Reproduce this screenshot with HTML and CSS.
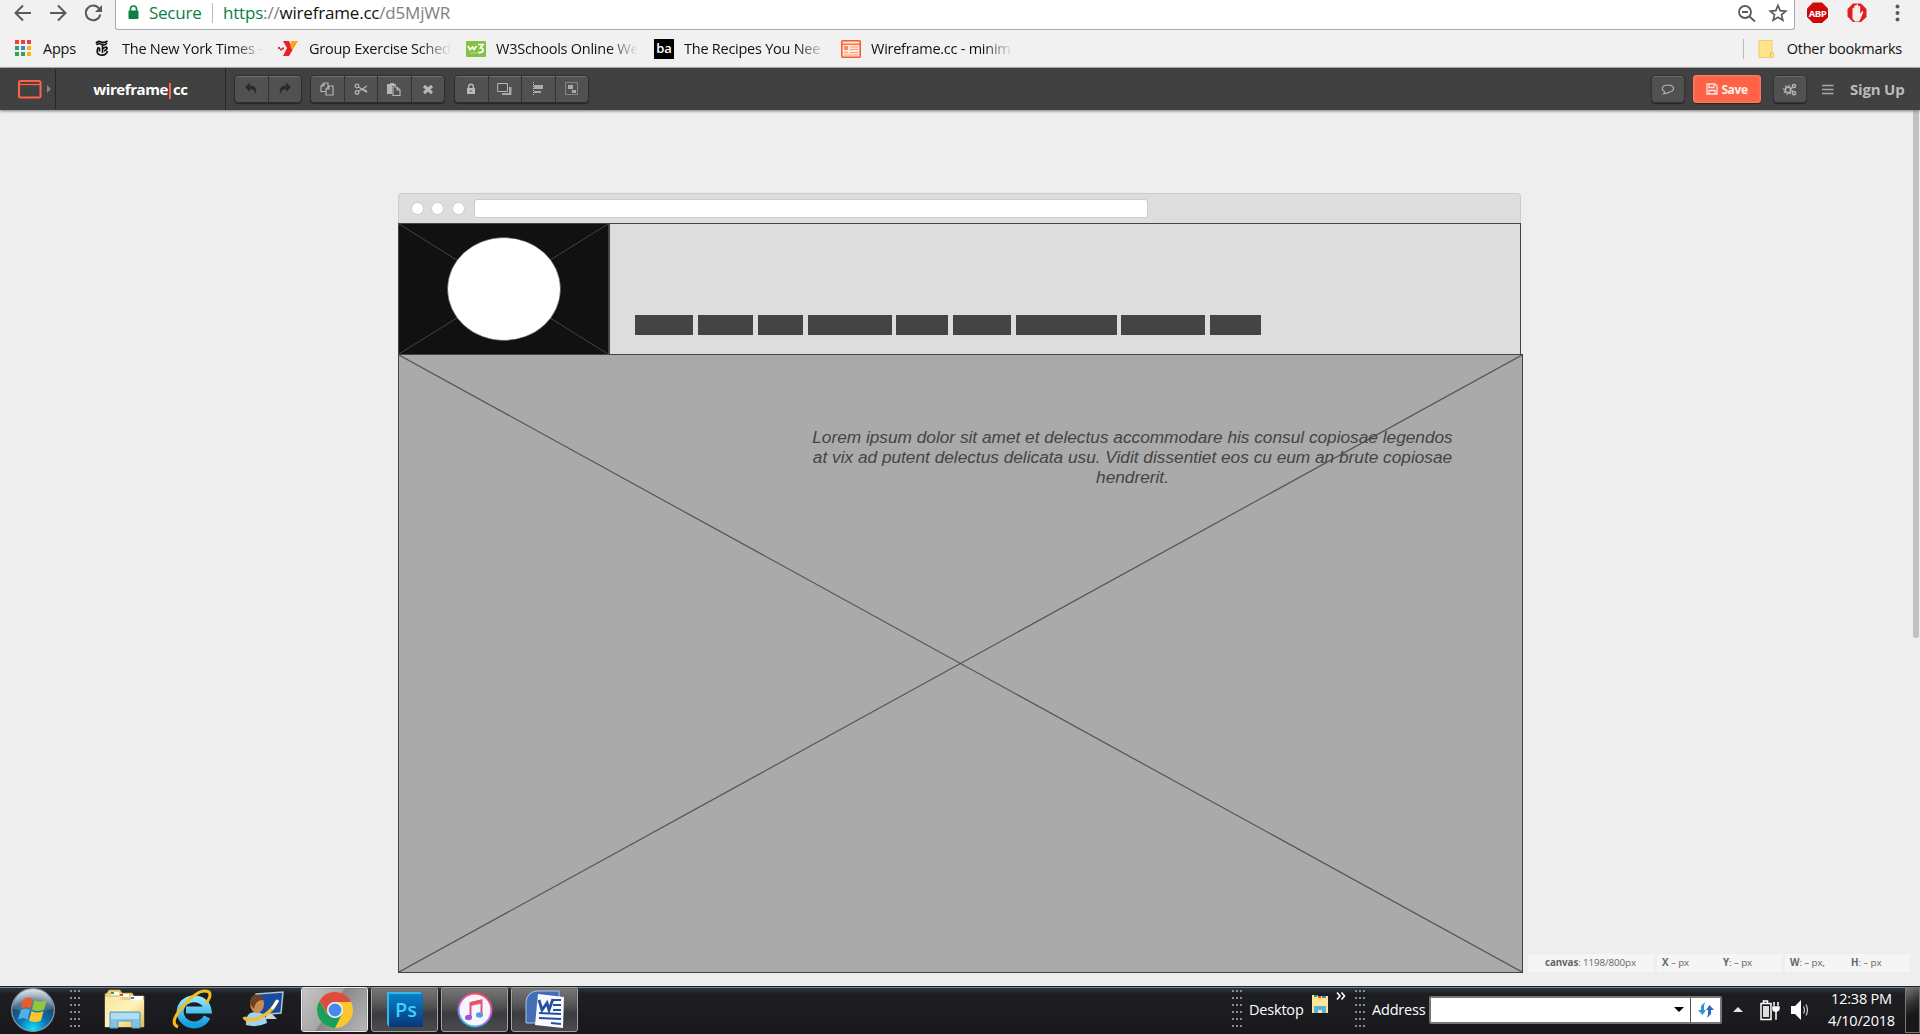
FILE: index.html
```html
<!DOCTYPE html>
<html lang="en">
<head>
<meta charset="utf-8">
<title>wireframe.cc</title>
<link rel="stylesheet" href="styles.css">
</head>
<body>
<header class="browser">
  <div class="nav">
    <svg class="nav-icons" width="115" height="30" viewBox="0 0 115 30" fill="none" stroke="#5a5a5a" stroke-width="2">
      <path d="M31 13H16M23 5.500L15.500 13L23 20.500"/>
      <path d="M50 13H65M58 5.500L65.500 13L58 20.500"/>
      <path d="M99 8.500A7.300 7.300 0 1 0 100.300 14.500"/><path d="M102 5v7h-7z" fill="#5a5a5a" stroke="none"/>
    </svg>
    <div class="omnibox">
      <svg class="lock" width="11" height="15" viewBox="0 0 11 15"><path d="M2.500 6V4a3 3 0 0 1 6 0v2" fill="none" stroke="#0b8043" stroke-width="1.600"/><rect x=".5" y="5.500" width="10" height="8.500" rx="1" fill="#0b8043"/></svg>
      <span class="secure">Secure</span>
      <span class="url"><span class="green">https</span>://<span class="host">wireframe.cc</span>/d5MjWR</span>
      <svg class="omni-icons" width="52" height="26" viewBox="0 0 52 26" fill="none" stroke="#5a5a5a" stroke-width="1.800"><circle cx="9" cy="12" r="6"/><path d="M6 12h6M13.500 16.500L19 21.500" /><path d="M42 5.500l2.200 5.100 5.500.5-4.200 3.700 1.300 5.400-4.800-2.900-4.800 2.900 1.300-5.400-4.200-3.700 5.500-.5z" stroke-width="1.700"/></svg>
    </div>
    <svg class="ext" width="124" height="30" viewBox="0 0 124 30">
      <path d="M18 2.500h9l6 6v9l-6 5.500h-9l-6-6v-8.500z" fill="#cf0a0a"/>
      <text x="22.500" y="16.500" text-anchor="middle" class="abp">ABP</text>
      <path d="M58 3.500h8l5.500 5.500v8L66 22h-8l-5.500-5.500V9z" fill="#e02020"/>
      <path d="M57.500 14V8.500q1-1.500 1.700 0V12V6q1-1.500 2 0v5.500V5q1-1.500 2 0v6.500V6.500q1-1.500 2 0V14l1.500-2.500q1.500-.8 1.500.7l-2.500 6.300-1.700 3h-4l-2.500-3z" fill="#f4efec"/>
      <g fill="#5a5a5a"><circle cx="102.500" cy="6.500" r="2"/><circle cx="102.500" cy="13" r="2"/><circle cx="102.500" cy="19.500" r="2"/></g>
    </svg>
  </div>
  <nav class="bookmarks">
    <a class="bm apps"><svg width="17" height="17" viewBox="0 0 17 17"><path d="M0 0h4v4H0zM6 0h4v4H6zM12 0h4v4h-4z" fill="#ee4035"/><path d="M0 6h4v4H0zM0 12h4v4H0z" fill="#34a05a"/><path d="M6 6h4v4H6z" fill="#2e8bf0"/><path d="M6 12h4v4H6z" fill="#34a05a"/><path d="M12 6h4v4h-4zM12 12h4v4h-4z" fill="#f9b50b"/></svg><span class="bm-text">Apps</span></a>
    <a class="bm nyt"><svg width="14" height="17" viewBox="0 0 14 17" fill="none" stroke="#111"><path d="M1 3.500Q3 .5 6 2T12.500 1" stroke-width="1.900"/><path d="M1.500 5Q4 3 7 4.500t5-1.500" stroke-width="1.500"/><path d="M3.500 7Q0 14 5.500 15T12.500 11" stroke-width="1.700"/><path d="M7.500 5v8M4.500 7.500v4M8 8.500q4-2.500 4-.5T9 11" stroke-width="1.600"/></svg><span class="bm-text fade">The New York Times -</span></a>
    <a class="bm ymca"><svg width="20" height="17" viewBox="0 0 20 17"><path d="M5 1h6l3 6-5 9H5l4-8z" fill="#e8222c"/><path d="M13 1h7l-5.500 9-2-3z" fill="#f8a51b"/><path d="M12.500 7l2 3-3.500 6H7z" fill="#e8222c"/><path d="M0 8h2m0 1.500h2m0-1h2" stroke="#e8222c" stroke-width="2"/></svg><span class="bm-text fade">Group Exercise Sched</span></a>
    <a class="bm w3"><svg width="20" height="16" viewBox="0 0 20 16"><rect width="20" height="16" rx="1" fill="#83c341"/><path d="M2 5l2 3.500L6.500 6 8 8.500 10.500 5M12 3.500h5L14.500 7q3 0 2.500 2.500T12 11.500" fill="none" stroke="#fff" stroke-width="1.700"/><path d="M4 12h7" stroke="#b6de8b"/></svg><span class="bm-text fade">W3Schools Online We</span></a>
    <a class="bm ba"><span class="ba-logo">ba</span><span class="bm-text fade">The Recipes You Nee</span></a>
    <a class="bm wf"><svg width="20" height="18" viewBox="0 0 20 18"><rect x=".8" y=".8" width="18.400" height="16.400" rx="1" fill="#ffe5da" stroke="#fa5a28" stroke-width="1.600"/><path d="M1 4.200h18" stroke="#fa5a28" stroke-width="1.200"/><path d="M3 6h4v4H3z" fill="#fa8a60"/><path d="M9 7h8M9 9.500h8M3 12.500h4M9 12.500h8M3 15h14" stroke="#fba07e" stroke-width="1.200"/></svg><span class="bm-text fade">Wireframe.cc - minim</span></a>
    <a class="bm other"><svg width="17" height="18" viewBox="0 0 17 18"><path d="M1 .5h13v12h1.500q1 2.500-.5 5H1z" fill="#ffe48b" stroke="#efcf62"/><path d="M12.500 17v-3q0-2 2-1.500" fill="none" stroke="#e8bf45"/></svg><span class="bm-text">Other bookmarks</span></a>
  </nav>
</header>

<div class="toolbar">
  <div class="device"><svg width="24" height="19" viewBox="0 0 24 19"><rect x="1" y="1" width="21.500" height="16.500" rx="1.500" fill="none" stroke="#ff6347" stroke-width="2"/><path d="M1 4.500h21" stroke="#ff6347" stroke-width="1.300"/></svg><i class="caret"></i></div>
  <div class="brand">wireframe<i class="bar"></i>cc</div>
  <div class="group two">
    <span class="btn"><svg width="16" height="14" viewBox="0 0 16 14"><path d="M2 5l5-4.500V3.500q6 0 6.500 5.500l-1.500 3Q12 7 7 7v3z" fill="#2b2b2b"/></svg></span>
    <span class="btn"><svg width="16" height="14" viewBox="0 0 16 14"><path d="M14 5L9 .5V3.500q-6 0-6.500 5.500L4 12Q4 7 9 7v3z" fill="#2b2b2b"/></svg></span>
  </div>
  <div class="group four">
    <span class="btn"><svg width="14" height="14" viewBox="0 0 14 14" fill="none" stroke="#b4b4b4" stroke-width="1.200"><path d="M6 9.500H1V4l3-3h4v3M4 1v3H1M6 7l3-3h4v9H6zM9 4v3H6"/></svg></span>
    <span class="btn"><svg width="14" height="14" viewBox="0 0 14 14" fill="none" stroke="#b4b4b4" stroke-width="1.300"><circle cx="3" cy="4" r="1.800"/><circle cx="3" cy="10.500" r="1.800"/><path d="M4.500 5l8.500 5.500M4.500 9.500L13 4M8 7l5 2.200"/></svg></span>
    <span class="btn"><svg width="14" height="14" viewBox="0 0 14 14"><path d="M0 2h3V1h4v1h2v2H5v8H0z" fill="#b4b4b4"/><path d="M6 5h4l3 3v5.500H6zM10 5v3h3" fill="#505050" stroke="#b4b4b4" stroke-width="1.200"/></svg></span>
    <span class="btn"><svg width="12" height="12" viewBox="0 0 12 12"><path d="M2 3l8 7M10 3l-8 7" stroke="#b8b8b8" stroke-width="3"/></svg></span>
  </div>
  <div class="group four last">
    <span class="btn"><svg width="10" height="12" viewBox="0 0 10 12"><path d="M2.700 5V3.500a2.300 2.300 0 0 1 4.600 0V5" fill="none" stroke="#b8b8b8" stroke-width="1.500"/><path d="M1 5h8v6H1z" fill="#b8b8b8"/><path d="M5 7v2" stroke="#555"/></svg></span>
    <span class="btn"><svg class="layers" width="16" height="16" viewBox="0 0 16 16"><path d="M5 6h9.500v8H5z" fill="#aaa"/><path d="M.5 2.500h10v8H.5z" fill="#4b4b4b" stroke="#4b4b4b" stroke-width="3"/><path d="M.7 2.500h9.800v8H.7z" fill="#4b4b4b" stroke="#bbb"/></svg></span>
    <span class="btn"><svg width="14" height="16" viewBox="0 0 14 16"><path d="M2.500 1v14" stroke="#bbb" stroke-dasharray="1 1"/><path d="M3 4h9v4H3zM3 10h7v2H3z" fill="#aaa"/></svg></span>
    <span class="btn"><svg width="15" height="16" viewBox="0 0 15 16"><path d="M1.500 1.500h12v12h-12z" fill="none" stroke="#bbb" stroke-dasharray="1 1"/><path d="M4 4h5v4H4zM8 9h4v3H8z" fill="#aaa"/></svg></span>
  </div>
  <div class="tools-right">
    <span class="single"><svg width="14" height="12" viewBox="0 0 14 12"><path d="M3.500 8.700C-.5 6.500 1 2 7 2s8 5.500 1 7.200Q5 10.800 2.500 10.700 4 9.800 3.500 8.700z" fill="none" stroke="#b4b4b4" stroke-width="1.100"/></svg></span>
    <span class="save"><svg width="12" height="12" viewBox="0 0 12 12"><path d="M1 1h8l2 2v8H1zM3 1v3.500h5V1M3 11V7.500h6V11" fill="none" stroke="#f7e4df" stroke-width="1.300"/></svg>Save</span>
    <span class="single settings"><svg width="14" height="13" viewBox="0 0 14 13" fill="none" stroke="#b4b4b4"><circle cx="5" cy="7" r="2.800" stroke-width="1.700"/><circle cx="5" cy="7" r="4.300" stroke-dasharray="1.500 1.870" stroke-width="1.300"/><circle cx="11" cy="3" r="1.600" stroke-width="1.500"/><circle cx="11" cy="10.200" r="1.600" stroke-width="1.500"/></svg></span>
    <svg class="burger" width="12" height="11" viewBox="0 0 12 11"><path d="M0 1.500h11.500M0 5.500h11.500M0 9.500h11.500" stroke="#a8a8a8" stroke-width="1.500"/></svg>
    <span class="signup">Sign Up</span>
  </div>
</div>

<main class="workspace">
  <div class="scroll-thumb"></div>
  <section class="artboard">
    <div class="frame-bar"><i class="dot"></i><i class="dot"></i><i class="dot"></i><div class="frame-url"></div></div>
    <div class="site-head">
      <div class="logo">
        <svg width="209" height="130" viewBox="0 0 209 130"><path d="M0 0L209 130M209 0L0 130" stroke="#444"/><ellipse cx="105" cy="65" rx="56.500" ry="51.500" fill="#fff" stroke="#444" stroke-width=".6"/></svg>
      </div>
      <div class="menu"><i></i><i></i><i></i><i></i><i></i><i></i><i></i><i></i><i></i></div>
    </div>
    <div class="hero">
      <svg class="cross" width="1123" height="617" viewBox="0 0 1123 617"><path d="M0 0L1123 617M1123 0L0 617" stroke="#555" stroke-width="1.200"/></svg>
      <p class="lorem">Lorem ipsum dolor sit amet et delectus accommodare his consul copiosae legendos<br>at vix ad putent delectus delicata usu. Vidit dissentiet eos cu eum an brute copiosae<br>hendrerit.</p>
    </div>
  </section>
  <div class="status">
    <div class="cell size"><b>canvas</b>: 1198/800px</div>
    <div class="cell"><span class="m"><b>X</b> – px</span><span><b>Y</b>: – px</span></div>
    <div class="cell"><span class="m"><b>W</b>: – px,</span><span><b>H</b>: – px</span></div>
  </div>
</main>

<footer class="taskbar">
  <svg class="orb" width="46" height="46" viewBox="0 0 46 46">
    <defs><radialGradient id="orb" cx=".5" cy=".95" r=".95"><stop offset="0" stop-color="#19e0ff"/><stop offset=".35" stop-color="#0878b4"/><stop offset=".7" stop-color="#1d4668"/><stop offset="1" stop-color="#a9c0ce"/></radialGradient><linearGradient id="shine" x2="0" y2="1"><stop offset="0" stop-color="#fff" stop-opacity=".6"/><stop offset="1" stop-color="#fff" stop-opacity=".1"/></linearGradient></defs>
    <circle cx="23" cy="23" r="21.300" fill="url(#orb)" stroke="#8399a8" stroke-width="1.300"/><path d="M3 22a20 20 0 0 1 40 0Q23 28 3 22z" fill="url(#shine)"/>
    <path d="M13 12.500q5-3.500 10-.5l-2.500 9.500q-4.500-3-9.500 0z" fill="#ec5b2c"/><path d="M24.500 13q5 3 12.500 0l-3 9.500q-6 3-12 0z" fill="#93c83d"/><path d="M11 23q5-3 9 0l-2.500 9.500q-4-3-9.500 0z" fill="#55aee8"/><path d="M21.500 24q5 3 12 0L31 33.500q-6 3-12 0z" fill="#fbc52f"/>
  </svg>
  <i class="grip g1"></i>
  <svg class="launch folder" width="42" height="42" viewBox="0 0 42 42"><defs><linearGradient id="fold" x2="1" y2="1"><stop offset="0" stop-color="#f6e7a5"/><stop offset=".5" stop-color="#fff2ba"/><stop offset="1" stop-color="#dfbb51"/></linearGradient></defs><path d="M3 4l2-3h11l2 3h10l2 3h10v31H1V5z" fill="#ead183" stroke="#b99b4b" stroke-width=".6"/><path d="M7 3h8v3H7zM16 5h9v3h-9z" fill="#fff"/><path d="M7 3h3v2H7z" fill="#2d9b43"/><path d="M16 5h3v2h-3z" fill="#e23b2e"/><path d="M27 7h12v4H27z" fill="#fff"/><path d="M27 8h3v2h-3z" fill="#268bd5"/><path d="M1 8h14l3 3h22v27H1z" fill="url(#fold)"/><path d="M6 23h30v16h-8v-7H14v7H6z" fill="#84c1e3" stroke="#5b9fc9"/><path d="M7 24h28v6H7z" fill="#b4dcf1"/></svg>
  <svg class="launch ie" width="42" height="42" viewBox="0 0 42 42"><defs><linearGradient id="ie" x2="0" y2="1"><stop offset="0" stop-color="#8be7ff"/><stop offset="1" stop-color="#139cdf"/></linearGradient></defs><path d="M35 28a14 13 0 1 1 1-7H14" fill="none" stroke="url(#ie)" stroke-width="7"/><path d="M6 38Q-4 34 12 16T37 3q3 4-3 11" fill="none" stroke="#f4bd1c" stroke-width="3"/></svg>
  <svg class="launch person" width="42" height="42" viewBox="0 0 42 42"><path d="M14 5l27-2-2 21-22 2z" fill="#174b9d" stroke="#b3c3d0" stroke-width="1.500"/><path d="M25 25h5l5 5H23z" fill="#ccd4da"/><path d="M4 36q-1-13 9-13 11 0 12 11-10 5-21 2z" fill="#9fd4ef"/><ellipse cx="15" cy="15" rx="7" ry="9" fill="#c98b50"/><path d="M8 15q0-11 9-9 5 1 4 5-8 0-9 9z" fill="#6b4220"/><path d="M2 28q3 6 17 0Q30 23 35 12" fill="none" stroke="#f2c02c" stroke-width="3.500"/><path d="M30 20l6-9" stroke="#fff" stroke-width="3"/></svg>
  <div class="apps-open">
    <span class="app active"><svg width="38" height="38" viewBox="0 0 38 38"><circle cx="19" cy="19" r="18" fill="#fbc62f"/><path d="M19 11h16.200A18 18 0 0 0 3.500 10l8 13z" fill="#dc4b3e"/><path d="M3.500 10A18 18 0 0 0 19 37l7-14-7 4-8-4z" fill="#17a05d"/><circle cx="19" cy="19" r="8" fill="#f5f5f5"/><circle cx="19" cy="19" r="6.500" fill="#4688f1"/></svg></span>
    <span class="app"><svg width="40" height="38" viewBox="0 0 40 38"><defs><linearGradient id="ps" x2="0" y2="1"><stop offset="0" stop-color="#087fca"/><stop offset="1" stop-color="#073779"/></linearGradient></defs><path d="M2 1h34v4H4v31l-2-3z" fill="#32b7e9"/><path d="M4 3h34v33H4z" fill="url(#ps)"/><text x="21" y="26" text-anchor="middle" class="ps-text">Ps</text></svg></span>
    <span class="app"><svg width="38" height="38" viewBox="0 0 38 38"><defs><linearGradient id="it" x1=".7" x2=".3" y2="1"><stop offset="0" stop-color="#fb4353"/><stop offset=".5" stop-color="#c45ae6"/><stop offset="1" stop-color="#30b8f5"/></linearGradient></defs><circle cx="19" cy="19" r="16.500" fill="#f8f5fa" stroke="url(#it)" stroke-width="2"/><path d="M14.500 26V12l11-2.500V23" fill="none" stroke="#dc4f91" stroke-width="2"/><path d="M14.500 11l11-2.500v4l-11 2.500z" fill="#ed5268"/><ellipse cx="12.500" cy="26.500" rx="3.500" ry="2.700" fill="#8f5be2"/><ellipse cx="23.500" cy="24" rx="3.500" ry="2.700" fill="#4b9de9"/></svg></span>
    <span class="app"><svg width="40" height="40" viewBox="0 0 40 40"><path d="M1 12Q2 2 12 1h22v32H1z" fill="#426fb4" stroke="#abc7e9"/><path d="M13 4l26 3-1 31-28-3z" fill="#f8faff"/><path d="M28 10h8M28 15h8M28 20h8M14 23l22 1M14 28l22 1M26 33l10 1" stroke="#254f9c" stroke-width="2"/><path d="M14 10l3 10 5-7 2 7 4-11" fill="none" stroke="#254f9c" stroke-width="2.800"/></svg></span>
  </div>
  <div class="tray">
    <i class="grip"></i><span class="label desktop">Desktop</span>
    <svg class="mini" width="18" height="20" viewBox="0 0 18 20"><path d="M1 1h5l1 1h10v17H1z" fill="#ffe696"/><path d="M3 1h3v2H3z" fill="#29a352"/><path d="M7 2h3v2H7z" fill="#e84e38"/><path d="M11 2h4v2h-4z" fill="#358cc4"/><path d="M3 12h12v7h-4v-3H7v3H3z" fill="#55b2df"/></svg>
    <svg class="chev" width="10" height="8" viewBox="0 0 10 8"><path d="M1 .5L4 4 1 7.500M5.500 .5l3 3.500-3 3.500" fill="none" stroke="#fff" stroke-width="1.600"/></svg>
    <i class="grip g3"></i><span class="label address">Address</span>
    <div class="field"><i class="drop"></i><span class="go"><svg width="18" height="18" viewBox="0 0 18 18"><path d="M8 1L4 5v4H1l4.500 5L9 9H7V5z" fill="#3292d8"/><path d="M10 17l4-4V9h3l-4.500-5L9 9h2v4z" fill="#2b6cc0"/></svg></span></div>
    <svg class="tray-icons" width="80" height="30" viewBox="0 0 80 30"><path d="M5 17l5-5 5 5z" fill="#e4e6ee"/><g fill="none" stroke="#fff" stroke-width="1.500"><path d="M33 8.500h10v16H33zM35.500 8V6h4v2"/><path d="M46 7v5M50 7v5"/></g><path d="M35 11h6v11h-6z" fill="#ddd"/><path d="M44 11h8v3q-1 3-3 3v8h-2v-8q-3 0-3-3z" fill="#fff" stroke="#222" stroke-width=".5"/><path d="M63 11h4l6-6v20l-6-6h-4z" fill="#fff"/><path d="M75.500 11.500q2 3.500 0 7M78 9.500q3 5.500 0 11" fill="none" stroke="#ccc" stroke-width="1.200"/></svg>
    <div class="clock"><span class="time">12:38 PM</span><span class="date">4/10/2018</span></div>
    <i class="peek"></i>
  </div>
</footer>
</body>
</html>
```
FILE: styles.css
```css
* { box-sizing: border-box; }
body { margin: 0; width: 1920px; height: 1034px; overflow: hidden; display: flex; flex-direction: column; background: #eee; font-family: "Open Sans", "Noto Sans", sans-serif; }
svg { display: block; flex: none; }
i { display: block; }

.browser { height: 68px; background: #f1f1f1; border-bottom: 1px solid #b3b3b3; flex: none; }
.nav { display: flex; height: 30px; }
.omnibox { width: 1680px; height: 30px; display: flex; align-items: center; padding: 0 6px 4px 12px; background: #fff; border: 1px solid #a9a9a9; border-top: 0; border-radius: 0 0 3px 3px; font-size: 17px; }
.lock { margin-right: 10px; }
.secure { width: 64px; height: 20px; line-height: 20px; color: #0b8043; border-right: 1px solid #bbb; white-space: nowrap; letter-spacing: -.25px; }
.url { margin-left: 10px; color: #808080; letter-spacing: -.19px; }
.green { color: #0b8043; }
.host { color: #111; }
.omni-icons { margin-left: auto; }
.abp { font: bold 9.500px "Open Sans", sans-serif; letter-spacing: -.4px; fill: #fff; }
.bookmarks { display: flex; height: 37px; align-items: center; padding-left: 15px; font-size: 14.500px; color: #111; }
.bm { display: flex; align-items: center; gap: 10px; white-space: nowrap; }
.bm-text { letter-spacing: -.25px; }
.apps { width: 80px; gap: 11px; }
.nyt { width: 183px; gap: 13px; }
.ymca { width: 188px; gap: 11px; }
.w3 { width: 188px; }
.ba { width: 187px; }
.wf { width: 190px; }
.fade { flex: none; width: 144px; -webkit-mask-image: linear-gradient(to right, #000 112px, transparent 142px); mask-image: linear-gradient(to right, #000 112px, transparent 142px); }
.ba-logo { width: 20px; height: 20px; background: #000; color: #fff; font-size: 13px; font-weight: 600; line-height: 18px; text-align: center; }
.other { margin-left: auto; margin-right: 18px; padding-left: 14px; height: 20px; border-left: 1px solid #bbb; gap: 12px; }

.toolbar { height: 42px; flex: none; display: flex; align-items: center; background: #414141; box-shadow: 0 1px 3px #777; z-index: 1; }
.device { width: 56px; height: 40px; padding-left: 18px; display: flex; align-items: center; gap: 5px; border-right: 1px solid #252525; }
.caret { border: 4px solid transparent; border-left-color: #858585; border-right: 0; }
.brand { width: 170px; height: 42px; display: flex; align-items: center; justify-content: center; border-right: 1px solid #252525; color: #fff; font-size: 15px; font-weight: 700; letter-spacing: -.4px; }
.bar { width: 2px; height: 16px; margin: 3px 2px 0 1px; background: #ff6347; }
.group { display: flex; height: 28px; margin-left: 8px; border: 1px solid #2f2f2f; border-radius: 4px; background: #515151; box-shadow: inset 0 1px #717171, 0 1px 1px #252525; }
.two { width: 68px; }
.four { width: 135px; }
.last { margin-left: 9px; }
.btn { flex: 1; display: flex; align-items: center; justify-content: center; }
.btn + .btn { border-left: 1px solid #333; }
.tools-right { margin-left: auto; display: flex; align-items: center; padding-right: 14px; }
.single { width: 34px; height: 28px; display: flex; align-items: center; justify-content: center; background: #515151; border: 1px solid #333; border-radius: 4px; box-shadow: inset 0 1px #686868, 0 1px 1px #252525; }
.save { width: 68px; height: 28px; margin: 0 12px 0 8px; display: flex; align-items: center; justify-content: center; gap: 3px; color: #fff0ed; font-size: 12px; font-weight: 700; letter-spacing: -.4px; background: #ff6347; border-radius: 4px; box-shadow: inset 0 0 2px 1px #ff8068, 0 1px 1px #252525; }
.burger { margin: 0 16px 0 15px; }
.signup { width: 56px; color: #bbb; font-size: 15px; font-weight: 700; letter-spacing: -.2px; white-space: nowrap; }

.workspace { height: 876px; flex: none; position: relative; padding: 83px 0 0 398px; }
.scroll-thumb { position: absolute; top: 0; right: 1px; width: 6px; height: 528px; background: #c1c1c1; border-radius: 0 0 3px 3px; }
.artboard { width: 1125px; }
.frame-bar { width: 1123px; height: 30px; display: flex; align-items: center; padding-left: 12px; background: #ddd; border: 1px solid #ccc; border-bottom: 0; border-radius: 4px 4px 0 0; }
.dot { width: 13px; height: 13px; margin-right: 7px; background: #fff; border: 1px solid #ccc; border-radius: 50%; }
.dot:nth-child(2) { margin-right: 8px; }
.frame-url { width: 674px; height: 19px; margin-left: 2px; background: #fff; border: 1px solid #ccc; border-radius: 3px; }
.site-head { width: 1123px; height: 131px; display: flex; background: #ddd; border: 1px solid #444; border-bottom: 0; }
.logo { width: 211px; background: #111; border-right: 2px solid #444; }
.menu { display: flex; margin: 91px 0 0 25px; height: 20px; }
.menu i { width: 84px; background: #444; margin-right: 4px; }
.menu i:nth-child(1) { width: 58px; margin-right: 5px; }
.menu i:nth-child(2) { width: 55px; margin-right: 5px; }
.menu i:nth-child(3) { width: 45px; margin-right: 5px; }
.menu i:nth-child(5) { width: 52px; margin-right: 5px; }
.menu i:nth-child(6) { width: 58px; margin-right: 5px; }
.menu i:nth-child(7) { width: 101px; }
.menu i:nth-child(8) { margin-right: 5px; }
.menu i:nth-child(9) { width: 51px; }
.hero { height: 619px; position: relative; padding: 72px 69px 0 413px; background: #aaa; border: 1px solid #444; }
.cross { position: absolute; left: 0; top: 0; }
.lorem { position: relative; margin: 0; font: italic 17.250px/20px "Liberation Sans", Arial, sans-serif; color: #444; text-align: center; white-space: nowrap; }
.status { position: absolute; left: 1528px; top: 844px; display: flex; gap: 3px; font-size: 9.800px; line-height: 18px; color: #666; letter-spacing: -.1px; }
.cell { width: 125px; height: 18px; display: flex; padding-left: 5px; background: #f5f5f5; white-space: pre; }
.size { width: 126px; padding-left: 17px; }
.m { width: 61px; }

.taskbar { height: 48px; flex: none; display: flex; align-items: center; position: relative; padding: 0 0 2px 10px; border-top: 1px solid #1d2529; box-shadow: inset 0 1px #7b8b91; background: linear-gradient(#30383c, #1d1e22 7px, #19191d); color: #fff; }
.grip { width: 12px; height: 39px; background: radial-gradient(circle at 1px 1px, #8a8a8a 1px, transparent 1.300px) 0 0 / 4px 7px; }
.g1 { margin: 0 22px 0 14px; }
.launch { margin-right: 28px; }
.ie { margin-left: -2px; }
.person { margin-right: 17px; }
.apps-open { display: flex; gap: 3px; align-self: stretch; }
.app { width: 67px; display: flex; align-items: center; justify-content: center; background: linear-gradient(#777, #555 40%, #3b3b40 60%, #4b4b50); border: 1px solid #a4a4a4; border-radius: 3px; box-shadow: inset 0 0 1px #222; }
.active { background: linear-gradient(125deg, #c8c8c8, #a5a5a5 45%, #888 46%, #b8b8b8); border-color: #eee; }
.ps-text { font: 600 20px "Open Sans", sans-serif; fill: #40d0ff; }
.tray { margin-left: auto; display: flex; align-items: center; height: 46px; }
.label { font-size: 14.500px; line-height: 20px; letter-spacing: -.2px; white-space: nowrap; }
.desktop { width: 62px; margin-left: 5px; }
.mini { margin-top: -12px; }
.chev { margin: -27px 9px 0 7px; }
.address { width: 57px; margin-left: 5px; }
.field { width: 293px; height: 28px; display: flex; justify-content: flex-end; align-items: center; background: #fff; border: 2px solid #777; border-radius: 2px; }
.drop { border: 5px solid transparent; border-top-color: #000; border-bottom: 0; margin-right: 6px; }
.go { width: 30px; height: 24px; display: flex; align-items: center; justify-content: center; border-left: 1px solid #555; }
.tray-icons { margin-left: 6px; }
.clock { width: 97px; display: flex; flex-direction: column; align-items: center; font-size: 14.500px; line-height: 22px; letter-spacing: -.2px; padding-left: 10px; }
.peek { width: 15px; height: 46px; border: 1px solid #777; background: linear-gradient(150deg, #777, #333 35%, #18181b 60%); }
```
